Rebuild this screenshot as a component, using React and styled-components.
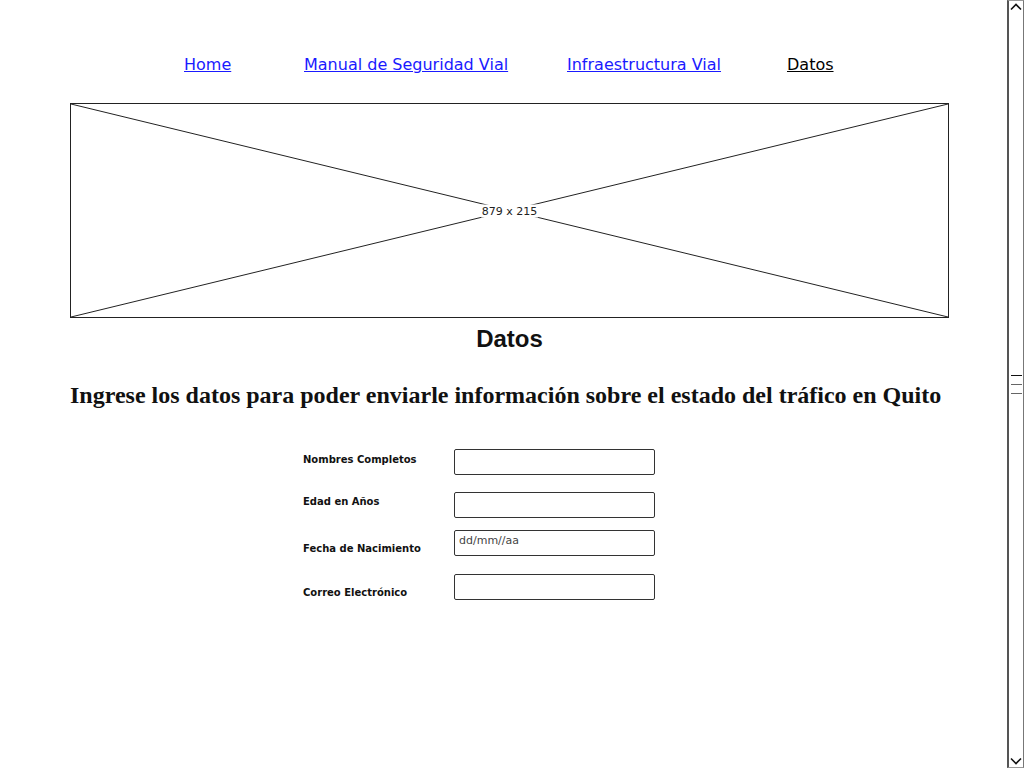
import React from "react";
import styled, { createGlobalStyle } from "styled-components";

const Global = createGlobalStyle`
  html, body {
    margin: 0;
    padding: 0;
    background: #fff;
    overflow: hidden;
  }
`;

const sketchFont = `"Comic Sans MS", "DejaVu Sans", sans-serif`;

const Page = styled.div`
  display: flex;
  width: 1024px;
  height: 768px;
`;

const Main = styled.div`
  flex: 1;
  display: flex;
  flex-direction: column;
  padding-left: 70px;
`;

const Nav = styled.nav`
  display: grid;
  grid-template-columns: 120px 263px 220px auto;
  margin: 55px 0 0 114px;
  height: 20px;
  align-items: center;
`;

const NavLink = styled.a`
  font-family: ${sketchFont};
  font-size: 16px;
  line-height: 20px;
  color: ${(p) => (p.$current ? "#000" : "#1a1aff")};
  text-decoration: underline;
  white-space: nowrap;
  cursor: pointer;
`;

const Placeholder = styled.div`
  position: relative;
  margin-top: 28px;
  width: 879px;
  height: 215px;
  box-sizing: border-box;
  border: 1px solid #222;
`;

const SizeLabel = styled.span`
  position: absolute;
  left: 50%;
  top: 50%;
  transform: translate(-50%, -50%);
  background: #fff;
  padding: 0 1px;
  font-family: "DejaVu Sans", sans-serif;
  font-size: 11px;
  color: #222;
`;

const Heading = styled.h1`
  width: 879px;
  margin: 8px 0 0;
  text-align: center;
  font-family: "Liberation Sans", Arial, sans-serif;
  font-weight: bold;
  font-size: 24px;
  line-height: 26px;
  color: #111;
`;

const Lead = styled.h2`
  margin: 30px 0 0;
  font-family: "Liberation Serif", "Times New Roman", serif;
  font-weight: bold;
  font-size: 24px;
  line-height: 26px;
  color: #111;
  white-space: nowrap;
`;

const Form = styled.form`
  display: flex;
  flex-direction: column;
  margin: 41px 0 0 233px;
`;

const Row = styled.div`
  display: flex;
  align-items: flex-start;
  margin-top: ${(p) => p.$gap || 0}px;
`;

const Label = styled.label`
  width: 151px;
  padding-top: ${(p) => p.$drop}px;
  font-family: ${sketchFont};
  font-weight: bold;
  font-size: 10px;
  line-height: 14px;
  color: #111;
`;

const Field = styled.input`
  box-sizing: border-box;
  width: 201px;
  height: 26px;
  border: 1px solid #333;
  border-radius: 2px;
  padding: 3px 4px 0;
  margin: 0;
  font-family: ${sketchFont};
  font-size: 11px;
  color: #333;
  background: #fff;
  outline: none;
  &::placeholder {
    color: #444;
  }
  ${(p) => p.$top && "padding-bottom: 8px;"}
`;

const Scrollbar = styled.div`
  flex: 0 0 17px;
  height: 768px;
  box-sizing: border-box;
  border-left: 2px solid #555;
  border-right: 1px solid #777;
  border-top: 1px solid #999;
  border-bottom: 1px solid #999;
  display: grid;
  grid-template-rows: 12px 1fr 12px;
  justify-items: center;
  align-items: center;
`;

const Grip = styled.div`
  display: flex;
  flex-direction: column;
  gap: 8px;
  width: 11px;
`;

const GripLine = styled.div`
  height: 1px;
  background: ${(p) => (p.$dark ? "#111" : "#666")};
`;

const Arrow = ({ down }) => (
  <svg width="12" height="8" viewBox="0 0 12 8" style={{ display: "block" }}>
    <path
      d={down ? "M1 1.5 L6 6.5 L11 1.5" : "M1 6.5 L6 1.5 L11 6.5"}
      fill="none"
      stroke="#111"
      strokeWidth="1.6"
    />
  </svg>
);

const fields = [
  { label: "Nombres Completos", drop: 4, gap: 0 },
  { label: "Edad en Años", drop: 3, gap: 17 },
  { label: "Fecha de Nacimiento", drop: 12, gap: 12, placeholder: "dd/mm//aa" },
  { label: "Correo Electrónico", drop: 12, gap: 18 },
];

export default function App() {
  return (
    <Page>
      <Global />
      <Main>
        <Nav>
          <NavLink>Home</NavLink>
          <NavLink>Manual de Seguridad Vial</NavLink>
          <NavLink>Infraestructura Vial</NavLink>
          <NavLink $current>Datos</NavLink>
        </Nav>
        <Placeholder>
          <svg width="877" height="213" viewBox="0 0 877 213" style={{ display: "block" }}>
            <line x1="0" y1="0" x2="877" y2="213" stroke="#222" strokeWidth="1" />
            <line x1="877" y1="0" x2="0" y2="213" stroke="#222" strokeWidth="1" />
          </svg>
          <SizeLabel>879 x 215</SizeLabel>
        </Placeholder>
        <Heading>Datos</Heading>
        <Lead>Ingrese los datos para poder enviarle información sobre el estado del tráfico en Quito</Lead>
        <Form>
          {fields.map((f) => (
            <Row key={f.label} $gap={f.gap}>
              <Label $drop={f.drop}>{f.label}</Label>
              <Field placeholder={f.placeholder} $top={!!f.placeholder} />
            </Row>
          ))}
        </Form>
      </Main>
      <Scrollbar>
        <Arrow />
        <Grip>
          <GripLine $dark />
          <GripLine />
          <GripLine />
        </Grip>
        <Arrow down />
      </Scrollbar>
    </Page>
  );
}
